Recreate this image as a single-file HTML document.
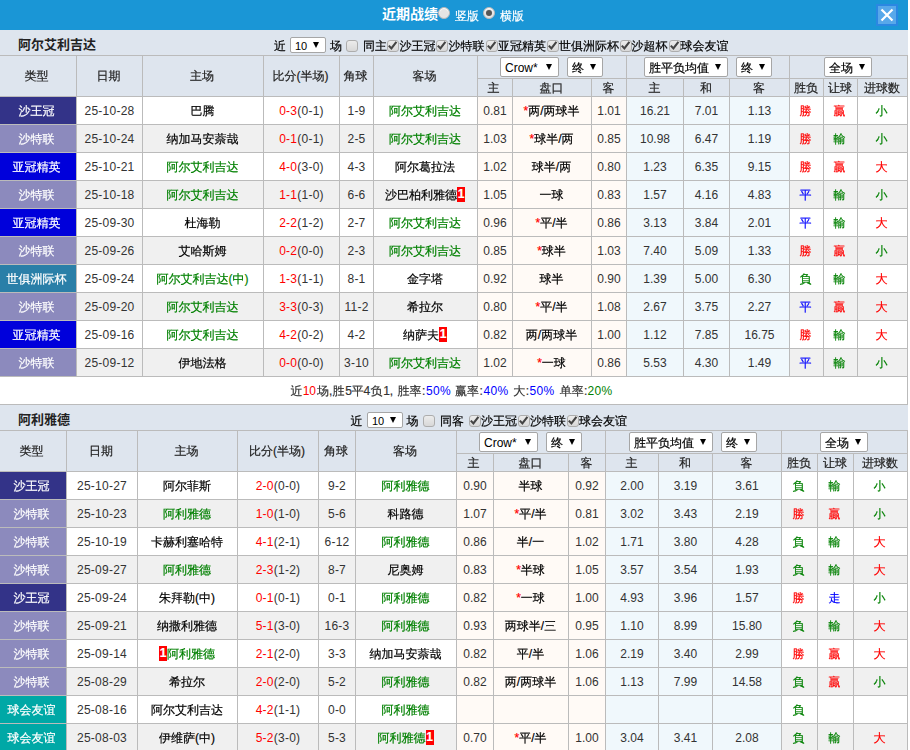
<!DOCTYPE html><html lang="zh"><head><meta charset="utf-8"><title>近期战绩</title><style>

html,body{margin:0;padding:0}
body{width:910px;height:750px;overflow:hidden;background:#fff;font-family:"Liberation Sans","WenQuanYi Zen Hei","Noto Sans CJK SC",sans-serif;font-size:12px;color:#333}
#w{position:relative;width:908px;height:750px;overflow:hidden}
.bar{position:absolute;left:0;top:0;width:908px;height:30px;background:#1a96d6;color:#fff}
.bar b{position:absolute;left:382px;top:5px;font-size:14px;line-height:18px;font-weight:bold;white-space:nowrap;font-family:"Liberation Sans","Noto Sans CJK SC",sans-serif}
.bar .l{position:absolute;top:9px;line-height:14px;font-size:12px;white-space:nowrap}
.rd{position:absolute;top:7px;width:10px;height:10px;border:1px solid #b9b9b9;border-radius:50%;background:#e4e4e4;box-shadow:inset 0 1px 1px #fff}
.rd.on:after{content:"";position:absolute;left:2px;top:2px;width:6px;height:6px;border-radius:50%;background:#555}
.x{position:absolute;left:876px;top:4px;width:18px;height:18px;border:2px solid #2b87e2;background:#58a8ea}
.tt{position:absolute;left:0;width:908px;height:25px;background:#dee5ee;white-space:nowrap;color:#000}
.tt b{position:absolute;left:18px;top:6px;font-size:13px;line-height:18px;color:#222;font-family:"Liberation Sans","Noto Sans CJK SC",sans-serif}
.tt .f{position:absolute;top:0;height:25px;line-height:30px}
.tt .a{position:absolute;top:9px;line-height:14px}
.tb{position:absolute;left:-1px;width:909px;table-layout:fixed;border-collapse:separate;border-spacing:1px;background:#bbb}
.tb td{padding:0;text-align:center;white-space:nowrap;overflow:hidden;height:27px;line-height:14px;vertical-align:middle;color:#333}
.h td{background:#dee5ee;color:#222}
.ha td{height:22px}
.ha td.sc{vertical-align:top;font-size:0;padding-right:0}
.ha td.sc .sel{font-size:12px}
.ha td.sc.p1{padding-right:1px}
.tb .hb td{height:15px;line-height:13px;padding-top:2px;padding-right:1px}
.ha td[rowspan]{height:40px}
tr.o td{background:#fff}
tr.e td{background:#f0f0f0}
tr.o td.hc,tr.e td.hc{background:#fffaf6}
tr.o td.oc,tr.e td.oc{background:#f0f8fc}
td.tm{color:#000;padding-right:1px;-webkit-text-stroke:0.2px}
.tb td.tp,.tb tr.h td:first-child{padding-right:3px}
.tb td.rs{padding-right:2px;-webkit-text-stroke:0.2px}
.h td,.tb td.tp,.tt .a,.smw span,.bar .l,.sel .st{-webkit-text-stroke:0.2px}
.smw span.p,.smw span.r,.sel.s1 .st,.sel.ts .st{-webkit-text-stroke:0}
.h td{padding-right:2px}
td.n{letter-spacing:0.25px}
.tb td.tp{color:#fff}
tr td.t1{background:#333388}
tr td.t2{background:#8c8abd}
tr td.t3{background:#0000db}
tr td.t4{background:#2a7fa8}
tr td.t5{background:#00a8a6}
.r,td.r{color:#f00}
.g,td.g{color:#008000}
.b,td.b{color:#00f}
.tb td.r{color:#f00}.tb td.g{color:#008000}.tb td.b{color:#00f}
.rc{display:inline-block;font-style:normal;font-weight:bold;background:#f00;color:#fff;width:8px;height:15px;line-height:15px;margin:-1px 0 0 0;text-align:center;vertical-align:top}
.sm td{background:#fff;height:27px;text-align:left}
.smw{position:relative;height:27px}
.smw span{position:absolute;top:7px;line-height:14px;white-space:nowrap}
.smw .p{letter-spacing:0.3px}
.sel{display:inline-block;position:relative;box-sizing:border-box;height:20px;border:1px solid #a6a6a6;border-radius:2px;background:#fff;vertical-align:top;text-align:left;color:#000;margin:1px 0 0 0}
.sel+.sel{margin-left:8px}
.sel .st{position:absolute;left:4px;top:3px;line-height:15px;color:#000}
.sel .ar{position:absolute;right:6px;top:6px;width:0;height:0;border-left:3px solid transparent;border-right:3px solid transparent;border-top:6px solid #000}
.sel.ts{position:absolute;top:7px;width:36px;height:16px;margin:0}
.sel.ts .st{left:4px;top:1px;line-height:14px;font-size:11px}
.sel.ts .ar{right:6.5px;top:4px;border-left-width:3.5px;border-right-width:3.5px}
.cb{position:absolute;top:10px;box-sizing:border-box;width:11.5px;height:11.5px;border:1px solid #adadad;border-radius:3px;background:linear-gradient(#ececec,#d8d8d8)}
.cb svg{position:absolute;left:-1px;top:-1px}

</style></head><body><div id="w">
<div class="bar"><b>近期战绩</b><span class="rd" style="left:438px"></span><span class="l" style="left:455px">竖版</span><span class="rd on" style="left:483px"></span><span class="l" style="left:500px">横版</span><span class="x"><svg width="18" height="18" viewBox="0 0 18 18"><path d="M3.5 3.5L14.5 14.5M14.5 3.5L3.5 14.5" stroke="#fff" stroke-width="2.2" fill="none"/></svg></span></div>
<div class="tt" style="top:30px"><b>阿尔艾利吉达</b><span class="a" style="left:274px">近</span><span class="sel ts" style="left:290px"><span class="st">10</span><span class="ar"></span></span><span class="a" style="left:330px">场</span><span class="cb" style="left:346px"></span><span class="a" style="left:363px">同主</span><span class="cb" style="left:387px"><svg width="11" height="11" viewBox="0 0 11 11"><path d="M1.8 5.6L4.4 8.4L9.4 1.8" stroke="#444" stroke-width="2.1" fill="none"/></svg></span><span class="a" style="left:399.5px">沙王冠</span><span class="cb" style="left:436px"><svg width="11" height="11" viewBox="0 0 11 11"><path d="M1.8 5.6L4.4 8.4L9.4 1.8" stroke="#444" stroke-width="2.1" fill="none"/></svg></span><span class="a" style="left:448.5px">沙特联</span><span class="cb" style="left:486px"><svg width="11" height="11" viewBox="0 0 11 11"><path d="M1.8 5.6L4.4 8.4L9.4 1.8" stroke="#444" stroke-width="2.1" fill="none"/></svg></span><span class="a" style="left:498px">亚冠精英</span><span class="cb" style="left:547px"><svg width="11" height="11" viewBox="0 0 11 11"><path d="M1.8 5.6L4.4 8.4L9.4 1.8" stroke="#444" stroke-width="2.1" fill="none"/></svg></span><span class="a" style="left:559px">世俱洲际杯</span><span class="cb" style="left:620px"><svg width="11" height="11" viewBox="0 0 11 11"><path d="M1.8 5.6L4.4 8.4L9.4 1.8" stroke="#444" stroke-width="2.1" fill="none"/></svg></span><span class="a" style="left:631.5px">沙超杯</span><span class="cb" style="left:669px"><svg width="11" height="11" viewBox="0 0 11 11"><path d="M1.8 5.6L4.4 8.4L9.4 1.8" stroke="#444" stroke-width="2.1" fill="none"/></svg></span><span class="a" style="left:680.5px">球会友谊</span></div>
<table class="tb" style="top:55px" cellspacing="1" cellpadding="0">
<colgroup><col style="width:76px"><col style="width:65px"><col style="width:120px"><col style="width:75px"><col style="width:33px"><col style="width:103px"><col style="width:34px"><col style="width:78px"><col style="width:34px"><col style="width:56px"><col style="width:45px"><col style="width:59px"><col style="width:33px"><col style="width:33px"><col style="width:49px"></colgroup>
<tr class="h ha"><td rowspan="2">类型</td><td rowspan="2">日期</td><td rowspan="2">主场</td><td rowspan="2">比分(半场)</td><td rowspan="2">角球</td><td rowspan="2">客场</td><td colspan="3" class="sc p1"><span class="sel s1" style="width:59px"><span class="st">Crow*</span><span class="ar"></span></span><span class="sel s2" style="width:36px"><span class="st">终</span><span class="ar"></span></span></td><td colspan="3" class="sc p0"><span class="sel s3" style="width:84px"><span class="st">胜平负均值</span><span class="ar"></span></span><span class="sel s4" style="width:36px"><span class="st">终</span><span class="ar"></span></span></td><td colspan="3" class="sc p1"><span class="sel s5" style="width:48px"><span class="st">全场</span><span class="ar"></span></span></td></tr>
<tr class="h hb"><td>主</td><td>盘口</td><td>客</td><td>主</td><td>和</td><td>客</td><td>胜负</td><td>让球</td><td>进球数</td></tr>
<tr class="o"><td class="tp t1">沙王冠</td><td class="n">25-10-28</td><td class="tm">巴腾</td><td class="n"><span class="r">0-3</span>(0-1)</td><td class="n">1-9</td><td class="tm"><span class="g">阿尔艾利吉达</span></td><td class="hc">0.81</td><td class="hc tm"><span class="r">*</span>两/两球半</td><td class="hc">1.01</td><td class="oc">16.21</td><td class="oc">7.01</td><td class="oc">1.13</td><td class="rs r">勝</td><td class="rs r">贏</td><td class="rs g">小</td></tr>
<tr class="e"><td class="tp t2">沙特联</td><td class="n">25-10-24</td><td class="tm">纳加马安萘哉</td><td class="n"><span class="r">0-1</span>(0-1)</td><td class="n">2-5</td><td class="tm"><span class="g">阿尔艾利吉达</span></td><td class="hc">1.03</td><td class="hc tm"><span class="r">*</span>球半/两</td><td class="hc">0.85</td><td class="oc">10.98</td><td class="oc">6.47</td><td class="oc">1.19</td><td class="rs r">勝</td><td class="rs g">輸</td><td class="rs g">小</td></tr>
<tr class="o"><td class="tp t3">亚冠精英</td><td class="n">25-10-21</td><td class="tm"><span class="g">阿尔艾利吉达</span></td><td class="n"><span class="r">4-0</span>(3-0)</td><td class="n">4-3</td><td class="tm">阿尔葛拉法</td><td class="hc">1.02</td><td class="hc tm">球半/两</td><td class="hc">0.80</td><td class="oc">1.23</td><td class="oc">6.35</td><td class="oc">9.15</td><td class="rs r">勝</td><td class="rs r">贏</td><td class="rs r">大</td></tr>
<tr class="e"><td class="tp t2">沙特联</td><td class="n">25-10-18</td><td class="tm"><span class="g">阿尔艾利吉达</span></td><td class="n"><span class="r">1-1</span>(1-0)</td><td class="n">6-6</td><td class="tm">沙巴柏利雅德<i class="rc">1</i></td><td class="hc">1.05</td><td class="hc tm">一球</td><td class="hc">0.83</td><td class="oc">1.57</td><td class="oc">4.16</td><td class="oc">4.83</td><td class="rs b">平</td><td class="rs g">輸</td><td class="rs g">小</td></tr>
<tr class="o"><td class="tp t3">亚冠精英</td><td class="n">25-09-30</td><td class="tm">杜海勒</td><td class="n"><span class="r">2-2</span>(1-2)</td><td class="n">2-7</td><td class="tm"><span class="g">阿尔艾利吉达</span></td><td class="hc">0.96</td><td class="hc tm"><span class="r">*</span>平/半</td><td class="hc">0.86</td><td class="oc">3.13</td><td class="oc">3.84</td><td class="oc">2.01</td><td class="rs b">平</td><td class="rs g">輸</td><td class="rs r">大</td></tr>
<tr class="e"><td class="tp t2">沙特联</td><td class="n">25-09-26</td><td class="tm">艾哈斯姆</td><td class="n"><span class="r">0-2</span>(0-0)</td><td class="n">2-3</td><td class="tm"><span class="g">阿尔艾利吉达</span></td><td class="hc">0.85</td><td class="hc tm"><span class="r">*</span>球半</td><td class="hc">1.03</td><td class="oc">7.40</td><td class="oc">5.09</td><td class="oc">1.33</td><td class="rs r">勝</td><td class="rs r">贏</td><td class="rs g">小</td></tr>
<tr class="o"><td class="tp t4">世俱洲际杯</td><td class="n">25-09-24</td><td class="tm"><span class="g">阿尔艾利吉达(中)</span></td><td class="n"><span class="r">1-3</span>(1-1)</td><td class="n">8-1</td><td class="tm">金字塔</td><td class="hc">0.92</td><td class="hc tm">球半</td><td class="hc">0.90</td><td class="oc">1.39</td><td class="oc">5.00</td><td class="oc">6.30</td><td class="rs g">負</td><td class="rs g">輸</td><td class="rs r">大</td></tr>
<tr class="e"><td class="tp t2">沙特联</td><td class="n">25-09-20</td><td class="tm"><span class="g">阿尔艾利吉达</span></td><td class="n"><span class="r">3-3</span>(0-3)</td><td class="n">11-2</td><td class="tm">希拉尔</td><td class="hc">0.80</td><td class="hc tm"><span class="r">*</span>平/半</td><td class="hc">1.08</td><td class="oc">2.67</td><td class="oc">3.75</td><td class="oc">2.27</td><td class="rs b">平</td><td class="rs r">贏</td><td class="rs r">大</td></tr>
<tr class="o"><td class="tp t3">亚冠精英</td><td class="n">25-09-16</td><td class="tm"><span class="g">阿尔艾利吉达</span></td><td class="n"><span class="r">4-2</span>(0-2)</td><td class="n">4-2</td><td class="tm">纳萨夫<i class="rc">1</i></td><td class="hc">0.82</td><td class="hc tm">两/两球半</td><td class="hc">1.00</td><td class="oc">1.12</td><td class="oc">7.85</td><td class="oc">16.75</td><td class="rs r">勝</td><td class="rs g">輸</td><td class="rs r">大</td></tr>
<tr class="e"><td class="tp t2">沙特联</td><td class="n">25-09-12</td><td class="tm">伊地法格</td><td class="n"><span class="r">0-0</span>(0-0)</td><td class="n">3-10</td><td class="tm"><span class="g">阿尔艾利吉达</span></td><td class="hc">1.02</td><td class="hc tm"><span class="r">*</span>一球</td><td class="hc">0.86</td><td class="oc">5.53</td><td class="oc">4.30</td><td class="oc">1.49</td><td class="rs b">平</td><td class="rs g">輸</td><td class="rs g">小</td></tr>
<tr class="sm"><td colspan="15"><div class="smw"><span class="" style="left:290.5px">近</span><span class="r" style="left:302.7px">10</span><span class="" style="left:317px">场,</span><span class="" style="left:332.6px">胜</span><span class="" style="left:345.3px">5</span><span class="" style="left:351.7px">平</span><span class="" style="left:363.4px">4</span><span class="" style="left:370.5px">负</span><span class="" style="left:383.2px">1,</span><span class="" style="left:397.6px">胜率</span><span class="" style="left:422.1px">:</span><span class="b p" style="left:426px">50%</span><span class="" style="left:455px">赢率</span><span class="" style="left:479.4px">:</span><span class="b p" style="left:483.6px">40%</span><span class="" style="left:513.3px">大</span><span class="" style="left:525.7px">:</span><span class="b p" style="left:529.6px">50%</span><span class="" style="left:559.8px">单率</span><span class="" style="left:584.1px">:</span><span class="g p" style="left:587.6px">20%</span></div></td></tr>
</table>
<div class="tt" style="top:405px"><b>阿利雅德</b><span class="a" style="left:350.5px">近</span><span class="sel ts" style="left:367px"><span class="st">10</span><span class="ar"></span></span><span class="a" style="left:406.6px">场</span><span class="cb" style="left:423px"></span><span class="a" style="left:440px">同客</span><span class="cb" style="left:469px"><svg width="11" height="11" viewBox="0 0 11 11"><path d="M1.8 5.6L4.4 8.4L9.4 1.8" stroke="#444" stroke-width="2.1" fill="none"/></svg></span><span class="a" style="left:481px">沙王冠</span><span class="cb" style="left:518px"><svg width="11" height="11" viewBox="0 0 11 11"><path d="M1.8 5.6L4.4 8.4L9.4 1.8" stroke="#444" stroke-width="2.1" fill="none"/></svg></span><span class="a" style="left:530px">沙特联</span><span class="cb" style="left:567px"><svg width="11" height="11" viewBox="0 0 11 11"><path d="M1.8 5.6L4.4 8.4L9.4 1.8" stroke="#444" stroke-width="2.1" fill="none"/></svg></span><span class="a" style="left:579px">球会友谊</span></div>
<table class="tb" style="top:430px" cellspacing="1" cellpadding="0">
<colgroup><col style="width:66px"><col style="width:70px"><col style="width:99px"><col style="width:80px"><col style="width:36px"><col style="width:100px"><col style="width:36px"><col style="width:74px"><col style="width:36px"><col style="width:52px"><col style="width:53px"><col style="width:68px"><col style="width:35px"><col style="width:35px"><col style="width:53px"></colgroup>
<tr class="h ha"><td rowspan="2">类型</td><td rowspan="2">日期</td><td rowspan="2">主场</td><td rowspan="2">比分(半场)</td><td rowspan="2">角球</td><td rowspan="2">客场</td><td colspan="3" class="sc p1"><span class="sel s1" style="width:59px"><span class="st">Crow*</span><span class="ar"></span></span><span class="sel s2" style="width:36px"><span class="st">终</span><span class="ar"></span></span></td><td colspan="3" class="sc p1"><span class="sel s3" style="width:84px"><span class="st">胜平负均值</span><span class="ar"></span></span><span class="sel s4" style="width:36px"><span class="st">终</span><span class="ar"></span></span></td><td colspan="3" class="sc p1"><span class="sel s5" style="width:48px"><span class="st">全场</span><span class="ar"></span></span></td></tr>
<tr class="h hb"><td>主</td><td>盘口</td><td>客</td><td>主</td><td>和</td><td>客</td><td>胜负</td><td>让球</td><td>进球数</td></tr>
<tr class="o"><td class="tp t1">沙王冠</td><td class="n">25-10-27</td><td class="tm">阿尔菲斯</td><td class="n"><span class="r">2-0</span>(0-0)</td><td class="n">9-2</td><td class="tm"><span class="g">阿利雅德</span></td><td class="hc">0.90</td><td class="hc tm">半球</td><td class="hc">0.92</td><td class="oc">2.00</td><td class="oc">3.19</td><td class="oc">3.61</td><td class="rs g">負</td><td class="rs g">輸</td><td class="rs g">小</td></tr>
<tr class="e"><td class="tp t2">沙特联</td><td class="n">25-10-23</td><td class="tm"><span class="g">阿利雅德</span></td><td class="n"><span class="r">1-0</span>(1-0)</td><td class="n">5-6</td><td class="tm">科路德</td><td class="hc">1.07</td><td class="hc tm"><span class="r">*</span>平/半</td><td class="hc">0.81</td><td class="oc">3.02</td><td class="oc">3.43</td><td class="oc">2.19</td><td class="rs r">勝</td><td class="rs r">贏</td><td class="rs g">小</td></tr>
<tr class="o"><td class="tp t2">沙特联</td><td class="n">25-10-19</td><td class="tm">卡赫利塞哈特</td><td class="n"><span class="r">4-1</span>(2-1)</td><td class="n">6-12</td><td class="tm"><span class="g">阿利雅德</span></td><td class="hc">0.86</td><td class="hc tm">半/一</td><td class="hc">1.02</td><td class="oc">1.71</td><td class="oc">3.80</td><td class="oc">4.28</td><td class="rs g">負</td><td class="rs g">輸</td><td class="rs r">大</td></tr>
<tr class="e"><td class="tp t2">沙特联</td><td class="n">25-09-27</td><td class="tm"><span class="g">阿利雅德</span></td><td class="n"><span class="r">2-3</span>(1-2)</td><td class="n">8-7</td><td class="tm">尼奥姆</td><td class="hc">0.83</td><td class="hc tm"><span class="r">*</span>半球</td><td class="hc">1.05</td><td class="oc">3.57</td><td class="oc">3.54</td><td class="oc">1.93</td><td class="rs g">負</td><td class="rs g">輸</td><td class="rs r">大</td></tr>
<tr class="o"><td class="tp t1">沙王冠</td><td class="n">25-09-24</td><td class="tm">朱拜勒(中)</td><td class="n"><span class="r">0-1</span>(0-1)</td><td class="n">0-1</td><td class="tm"><span class="g">阿利雅德</span></td><td class="hc">0.82</td><td class="hc tm"><span class="r">*</span>一球</td><td class="hc">1.00</td><td class="oc">4.93</td><td class="oc">3.96</td><td class="oc">1.57</td><td class="rs r">勝</td><td class="rs b">走</td><td class="rs g">小</td></tr>
<tr class="e"><td class="tp t2">沙特联</td><td class="n">25-09-21</td><td class="tm">纳撒利雅德</td><td class="n"><span class="r">5-1</span>(3-0)</td><td class="n">16-3</td><td class="tm"><span class="g">阿利雅德</span></td><td class="hc">0.93</td><td class="hc tm">两球半/三</td><td class="hc">0.95</td><td class="oc">1.10</td><td class="oc">8.99</td><td class="oc">15.80</td><td class="rs g">負</td><td class="rs g">輸</td><td class="rs r">大</td></tr>
<tr class="o"><td class="tp t2">沙特联</td><td class="n">25-09-14</td><td class="tm"><i class="rc">1</i><span class="g">阿利雅德</span></td><td class="n"><span class="r">2-1</span>(2-0)</td><td class="n">3-3</td><td class="tm">纳加马安萘哉</td><td class="hc">0.82</td><td class="hc tm">平/半</td><td class="hc">1.06</td><td class="oc">2.19</td><td class="oc">3.40</td><td class="oc">2.99</td><td class="rs r">勝</td><td class="rs r">贏</td><td class="rs r">大</td></tr>
<tr class="e"><td class="tp t2">沙特联</td><td class="n">25-08-29</td><td class="tm">希拉尔</td><td class="n"><span class="r">2-0</span>(2-0)</td><td class="n">5-2</td><td class="tm"><span class="g">阿利雅德</span></td><td class="hc">0.82</td><td class="hc tm">两/两球半</td><td class="hc">1.06</td><td class="oc">1.13</td><td class="oc">7.99</td><td class="oc">14.58</td><td class="rs g">負</td><td class="rs r">贏</td><td class="rs g">小</td></tr>
<tr class="o"><td class="tp t5">球会友谊</td><td class="n">25-08-16</td><td class="tm">阿尔艾利吉达</td><td class="n"><span class="r">4-2</span>(1-1)</td><td class="n">0-0</td><td class="tm"><span class="g">阿利雅德</span></td><td class="hc"></td><td class="hc tm"></td><td class="hc"></td><td class="oc"></td><td class="oc"></td><td class="oc"></td><td class="rs g">負</td><td class="rs "></td><td class="rs "></td></tr>
<tr class="e"><td class="tp t5">球会友谊</td><td class="n">25-08-03</td><td class="tm">伊维萨(中)</td><td class="n"><span class="r">5-2</span>(3-0)</td><td class="n">5-3</td><td class="tm"><span class="g">阿利雅德</span><i class="rc">1</i></td><td class="hc">0.70</td><td class="hc tm"><span class="r">*</span>平/半</td><td class="hc">1.00</td><td class="oc">3.04</td><td class="oc">3.41</td><td class="oc">2.08</td><td class="rs g">負</td><td class="rs g">輸</td><td class="rs r">大</td></tr>
</table>
</div></body></html>
